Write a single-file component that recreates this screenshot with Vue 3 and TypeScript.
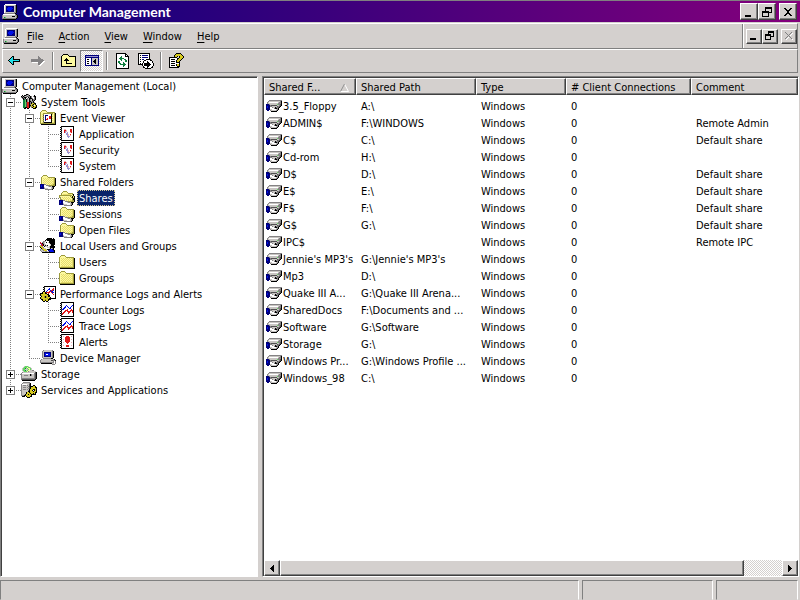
<script setup lang="ts">
import { computed, defineComponent, h, ref } from 'vue'

const palette: Record<string, string> = {
  k: '#000000', w: '#ffffff', g: '#848284', s: '#c8c5c2', d: '#505050',
  b: '#0010e8', n: '#00007b', y: '#fdf9a0', f: '#e6dc6c', o: '#9c9a3c',
  r: '#e01818', c: '#20e0e8', e: '#108040', l: '#60d860', p: '#9a94d0',
  t: '#008080', m: '#842184', a: '#d8cc20', i: '#f0b0b8',
}

const sprites: Record<string, string[]> = {
  pc: [
    '...wwwwwwwwwww..',
    '..wssssssssssgk.',
    '..wsnnnnnnnnsgk.',
    '..wsnnbbbbnnsgk.',
    '..wsnbbbbbbnsgk.',
    '..wsnbbbbbnnsgk.',
    '..wsnnbbbnnnsgk.',
    '..wsnnnnnnnnsgk.',
    '..wsssssssssggk.',
    '..gggggggggggk..',
    '.wwwwwwwwwwwwgk.',
    'gssssssssssssggk',
    'gssssssssskkksgk',
    'gselssssssssssgk',
    'ggggggggggggggk.',
    '.kkkkkkkkkkkkk..',
  ],
  tools: [
    '.....kkg........',
    '.k.kkgsgk....k..',
    'kgkgsgdggkg.gkk.',
    'gkgkkd.kgkg..gk.',
    '.gkgk.gskkkg.gk.',
    '..kegkgskgskggk.',
    '..eelkgskgskgk..',
    '..eelkgskkggk...',
    '..eeldrrkgkgkg..',
    '..eeldrrkgkaakk.',
    '..eeldrrkgaokak.',
    '..eeldrrkkako.ak',
    '..eeldrrkgoakaak',
    '..eekkrrk.gkaakk',
    '...kk.kk....kkk.',
    '................',
  ],
  eventviewer: [
    '..oooo..........',
    '.oyyyyo.........',
    'oyyyyyyoooooooo.',
    'oyyooooooooooyok',
    'oyfowwwwwwwkfyok',
    'oyydwnnnwwwkyyok',
    'oyfownwwwrrkfyok',
    'oyydwnwwwrrkyyok',
    'oyfownwrwrrkfyok',
    'oyydwnrrwwwkyyok',
    'oyfownwwwwwkfyok',
    'oyydwwwwwwwkyyok',
    'oyfokkkkkkkkffok',
    'oooooooooooooook',
    '.kkkkkkkkkkkkkkk',
    '................',
  ],
  log: [
    '..kkkkkkkkkkkkk.',
    '.kdwwwwwwwwwwwk.',
    '..kwwwwwwwwwwwk.',
    '.kdwwiiwwwwrrwk.',
    '..kwwrriwwwrrwk.',
    '.kdwwrpiwwwrrwk.',
    '..kwwrpwpwwirwk.',
    '.kdwwwwppwwwwwk.',
    '..kwwwwppiwrwwk.',
    '.kdwwwwwpiwiwwk.',
    '..kwwwwwpppwwwk.',
    '.kdwwwwwwpwwwwk.',
    '..kwwwwwwwwwwwk.',
    '.kdwwwwwwwwwwwk.',
    '..kkkkkkkkkkkkk.',
    '................',
  ],
  folder: [
    '................',
    '..oooo..........',
    '.oyyyyo.........',
    'oyyyyyyoooooooo.',
    'oyfyfyfyfyfyffok',
    'oyyfyfyfyfyfyfok',
    'oyfyfyfyfyfyffok',
    'oyyfyfyfyfyfyfok',
    'oyfyfyfyfyfyffok',
    'oyyfyfyfyfyfyfok',
    'oyfyfyfyfyfyffok',
    'oyyfyfyfyfyfyfok',
    'oyffffffffffffok',
    'oooooooooooooook',
    '.kkkkkkkkkkkkkkk',
    '................',
  ],
  shared: [
    '................',
    '...oooo.........',
    '..oyyyyo........',
    '.oyyyyyyooooooo.',
    '.oyfyfyfyfyfyfok',
    '.oyyfyfyfyfyffok',
    '.oyfyfyfyfyfyfok',
    '.oyyfyfyfyfyffok',
    '.oyfyfyfyfyfyfok',
    '.oyyfyfyfyfyffok',
    'nnnnggyfyfyffook',
    'nbnnwwgggooooook',
    'nbnnwwwwsggskkk.',
    'nnnnswwwwwwsgk..',
    'nnnngssswwwsgk..',
    '.....gggggggk...',
  ],
  shareopen: [
    '................',
    '....oooo........',
    '...oyyyyo.......',
    '..oyyyyyyooooo..',
    '..oyffffffffyok.',
    'oooooooooooooyk.',
    'oyyyyyyyyyyoykfk',
    'ogyfyfyfyfyyokfk',
    '.oyyfyfyfyfyyokk',
    '.ogfyfyfyfyfyokk',
    'nnnnggyfyfyffook',
    'nbnnwwgggooooook',
    'nbnnwwwwsggskkk.',
    'nnnnswwwwwwsgk..',
    'nnnngssswwwsgk..',
    '.....gggggggk...',
  ],
  users: [
    '.......kkkkk.k..',
    '......kkkkkkkkk.',
    '.....kskkkkkkkk.',
    '...ggswwwkkkkkk.',
    'r.ggswkwskkkkkk.',
    'mrkgswwwwskkkkk.',
    '.mrksswwwwskkkk.',
    'amrkskskwwskkk..',
    'aagwkssswskkkkk.',
    'kaagwwwssskkkkk.',
    '.kaasswwwsksgk..',
    'gsgaaaskkkbbnk..',
    'gssgaaawnbbbbnk.',
    '.gsssggssnbbbbk.',
    '..kkkkkkkkkkkkk.',
    '................',
  ],
  performance: [
    '....kkkkkkkkkkkk',
    '...kdwwwwwwwwwwk',
    '....kwwwwbwwwrwk',
    '...kdwwwbbwwrrwk',
    '....kwwbwwbrrbwk',
    '...kkwbwwrrbbwwk',
    '..kaakrrrrwrbbwk',
    'kkkaakkwrwwwrwwk',
    'kaaaaaakkwwwwrwk',
    'koaaaaaakkwwwwwk',
    '.kaaokoakkwwwwwk',
    'kaaaokoaaakwwwwk',
    'koaaaaaoakkkkkkk',
    '.kkaaoaakkk.....',
    '..kaakaak.......',
    '...kk.kk........',
  ],
  graph: [
    '..kkkkkkkkkkkkk.',
    '.kdwwwwwwwwwwwk.',
    '..kwwwwwwwwwwwk.',
    '.kdwwwwbwwwwwbk.',
    '..kwwwbwbwwwbwk.',
    '.kdwwbbwwbwbwwk.',
    '..kwbbwwwwbbwwk.',
    '.kdbbwwwrwwwrwk.',
    '..kwwwrrrwwrrrk.',
    '.kdwwrrwrrrrwrk.',
    '..kwrrwwwrrwwrk.',
    '.kdrrwwwwrwwwwk.',
    '..krwwwwwwwwwwk.',
    '.kdwwwwwwwwwwwk.',
    '..kkkkkkkkkkkkk.',
    '................',
  ],
  alert: [
    '..kkkkkkkkkkkkk.',
    '.kdwwwwwwwwwwwk.',
    '..kwiwwrrrwwiwk.',
    '.kdwwwrrrrrwwwk.',
    '..kwwwrrrrrwwwk.',
    '.kdwiwrrrrrwiwk.',
    '..kwwwrrrrrwwwk.',
    '.kdwwwrrrrrwwwk.',
    '..kwiwwrrrwwiwk.',
    '.kdwwwwwrwwwwwk.',
    '..kwwwwwwwwwwwk.',
    '.kdwiwwrrrwwiwk.',
    '..kwwwwrrrwwwwk.',
    '.kdwwwwwwwwwwwk.',
    '..kkkkkkkkkkkkk.',
    '................',
  ],
  device: [
    '...gssssssssg...',
    '..gsssssssssgk..',
    '..gsnnnnnnnsgk..',
    '..gsnbbbbbnsgk..',
    '..gsnbwwbbnsgk..',
    '..gsnbbbbbnsgk..',
    '..gsnnnnnnnsgk..',
    '..gsssssssssgk..',
    '...ggggggggkk...',
    '.gsssssssssssgk.',
    'gssssssssssddggk',
    'gssssssssssssgwg',
    'ggggggggggggggwg',
    '.kkkkkkkkkkksswg',
    '............ggg.',
    '................',
  ],
  storage: [
    '...sllls........',
    '..slllylls......',
    '.slleslyyls.....',
    '.sllssslyls.....',
    '.slleslyyssgg...',
    '..slllygsssssss.',
    '.gssssssssssssdk',
    'gwwwwwwwwwwwwgdk',
    'gsssssssskgssgdk',
    'gssggggsskgssgdk',
    'gssssssssssssgdk',
    'gssssssssssssgdk',
    'ggggggggggggggdk',
    'gdddddddddddddk.',
    '.kkkkkkkkkkkkk..',
    '................',
  ],
  services: [
    '..ggggggg.......',
    '.gssssssgk......',
    'gwwwwwssdk......',
    'gsgggsgsdk..kk..',
    'gssssssgdkkkaak.',
    'gsgggsgsdkaaaakk',
    'gssssssgdkaaaaak',
    'gsgggsgskaaakkak',
    'gssssssgkaakwkak',
    'gsssssskkaaakaak',
    'gsssskaakaaaaakk',
    'gsssskaaakaakak.',
    'gssskaakaakkkkk.',
    'gggkkaaaaak.....',
    '.kkk.kaaakk.....',
    '......kkk.......',
  ],
  drive: [
    '................',
    '................',
    '...ggggggggggggg',
    '..gsssssssssssgk',
    '.gswwwwwwwwwsggk',
    '.gssssssssssgggk',
    'nnngssssssslggdk',
    'nnnngddddddssgdk',
    'nbnnggsssssdgdk.',
    'nbnnwwgsskggdk..',
    'nnnnwwwwgkkgk...',
    'nnnnsswwwwsgk...',
    '.nn.gsssssgk....',
    '.....kkkkkk.....',
    '................',
    '................',
  ],
  back: [
    '................',
    '................',
    '................',
    '.....kk.........',
    '....kck.........',
    '...kcck.........',
    '..kccckkkkkkk...',
    '.kcccccccccck...',
    '..kccckkkkkkk...',
    '...kcck.........',
    '....kck.........',
    '.....kk.........',
    '................',
    '................',
    '................',
    '................',
  ],
  forward: [
    '................',
    '................',
    '................',
    '........g.......',
    '........gg......',
    '........ggg.....',
    '.gggggggggggg...',
    '.ggggggggggggg..',
    '.ggggggggggggww.',
    '..wwwwwwggggww..',
    '........gggww...',
    '........ggww....',
    '.........ww.....',
    '................',
    '................',
    '................',
  ],
  up: [
    '................',
    '..kkkkk.........',
    '.kyyyyyk........',
    'kyyyyyyykkkkkkk.',
    'kyyyyyyyyyyyyyk.',
    'kyyyykyyyyyyyyk.',
    'kyyykkkyyyyyyyk.',
    'kyykkkkkyyyyyyk.',
    'kyyyykyyyyyyyyk.',
    'kyyyykyyyyyyyyk.',
    'kyyyykkkkkkyyyk.',
    'kyyyyyyyyyyyyyk.',
    'kyyyyyyyyyyyyyk.',
    'kkkkkkkkkkkkkkk.',
    '................',
    '................',
  ],
  showtree: [
    '................',
    '................',
    '.nnnnnnnnnnnnnn.',
    '.nppppppppppppn.',
    '.nnnnnnnnnnnnnn.',
    '.nwwwwwnssssssn.',
    '.nwkkwwnssskssn.',
    '.nwwwwwnsskkssn.',
    '.nwkkwwnskkkssn.',
    '.nwwwwwnsskkssn.',
    '.nwkkwwnssskssn.',
    '.nwwwwwnssssssn.',
    '.nnnnnnnnnnnnnn.',
    '................',
    '................',
    '................',
  ],
  refresh: [
    '.kkkkkkkkkk.....',
    '.kwwwwwwwwkk....',
    '.kwwwwwwwwkwk...',
    '.kwwwwewwwkkkk..',
    '.kwwweewwwwwwk..',
    '.kwweeeeewwwwk..',
    '.kwwweewweewwk..',
    '.kwwwwewwweewk..',
    '.kweewwwwweewk..',
    '.kweewwwewwwwk..',
    '.kwweewweewwwk..',
    '.kwwweeeeeewwk..',
    '.kwwwwwweewwwk..',
    '.kwwwwwwewwwwk..',
    '.kwwwwwwwwwwwk..',
    '.kkkkkkkkkkkkk..',
  ],
  export: [
    'kkkkkkkkkkkk....',
    'kwwwwwwwwwwk....',
    'kwkwnnnnnnwk....',
    'kwwwwwwwwwwk....',
    'kwkwnnnnnnwk....',
    'kwwwwwwwwwwk....',
    'kwkwnnwwkkkkk...',
    'kwwwwwkkwwwwkk..',
    'kwkwwkwwwkwwwwk.',
    'kwwwwkwwwkkwwwk.',
    'kwkwkwkkkkkkwwwk',
    'kkkkkwkkkkkkkwwk',
    '....kwkkkkkkwwwk',
    '.....kwwwkkwwwk.',
    '.....kkwwkwwwkk.',
    '.......kkkkkk...',
  ],
  help: [
    '.......kkkkk....',
    '......kaaaaak...',
    '.....kaaaaaaak..',
    '.....kaak.kaaak.',
    'kkkkkkkk..kaaak.',
    'kwwwwwwwkkaaak..',
    'kwkkkkwwkaaak...',
    'kwwwwwwkaaak....',
    'kwkkkkwkaak.....',
    'kwwwwwwkkkk.....',
    'kwkkkkwwwwk.....',
    'kwwwwwwkaak.....',
    'kwkkkkwkaak.....',
    'kwwwwwwwkkk.....',
    'kkkkkkkkkk......',
    '................',
  ],
}

// Turns a sprite into one path per colour, joining horizontal runs.
function tracePaths(rows: string[]): { fill: string; d: string }[] {
  const byColour = new Map<string, string>()
  rows.forEach((row, y) => {
    let x = 0
    while (x < row.length) {
      const key = row[x]
      let end = x + 1
      while (end < row.length && row[end] === key) end++
      if (palette[key]) {
        byColour.set(key, (byColour.get(key) ?? '') + `M${x} ${y}h${end - x}v1H${x}z`)
      }
      x = end
    }
  })
  return [...byColour].map(([key, d]) => ({ fill: palette[key], d }))
}

const traced = Object.fromEntries(
  Object.entries(sprites).map(([name, rows]) => [name, tracePaths(rows)]),
)

const PixelIcon = defineComponent({
  props: { name: { type: String, required: true } },
  setup: (props) => () =>
    h(
      'svg',
      { viewBox: '0 0 16 16', width: 16, height: 16, 'shape-rendering': 'crispEdges', 'aria-hidden': 'true' },
      traced[props.name].map((p) => h('path', p)),
    ),
})

interface TreeNode { label: string; icon: string; depth: number; open?: boolean }

const nodes = ref<TreeNode[]>([
  { label: 'Computer Management (Local)', icon: 'pc', depth: 0 },
  { label: 'System Tools', icon: 'tools', depth: 1, open: true },
  { label: 'Event Viewer', icon: 'eventviewer', depth: 2, open: true },
  { label: 'Application', icon: 'log', depth: 3 },
  { label: 'Security', icon: 'log', depth: 3 },
  { label: 'System', icon: 'log', depth: 3 },
  { label: 'Shared Folders', icon: 'shared', depth: 2, open: true },
  { label: 'Shares', icon: 'shareopen', depth: 3 },
  { label: 'Sessions', icon: 'shared', depth: 3 },
  { label: 'Open Files', icon: 'shared', depth: 3 },
  { label: 'Local Users and Groups', icon: 'users', depth: 2, open: true },
  { label: 'Users', icon: 'folder', depth: 3 },
  { label: 'Groups', icon: 'folder', depth: 3 },
  { label: 'Performance Logs and Alerts', icon: 'performance', depth: 2, open: true },
  { label: 'Counter Logs', icon: 'graph', depth: 3 },
  { label: 'Trace Logs', icon: 'graph', depth: 3 },
  { label: 'Alerts', icon: 'alert', depth: 3 },
  { label: 'Device Manager', icon: 'device', depth: 2 },
  { label: 'Storage', icon: 'storage', depth: 1, open: false },
  { label: 'Services and Applications', icon: 'services', depth: 1, open: false },
])

const selected = ref('Shares')

const visibleRows = computed(() => {
  const shown: TreeNode[] = []
  let hiddenBelow = Infinity
  for (const node of nodes.value) {
    if (node.depth > hiddenBelow) continue
    hiddenBelow = node.open === false ? node.depth : Infinity
    shown.push(node)
  }
  return shown.map((node, i) => {
    const guides: string[] = []
    for (let level = 1; level <= node.depth; level++) {
      const next = shown.slice(i + 1).find((n) => n.depth <= level)
      const continues = next !== undefined && next.depth === level
      if (level === node.depth) guides.push(continues ? 'tee' : 'elbow')
      else guides.push(continues ? 'line' : 'blank')
    }
    return { node, guides }
  })
})

const menus = ['File', 'Action', 'View', 'Window', 'Help']

const columns = ['Shared F...', 'Shared Path', 'Type', '# Client Connections', 'Comment']

const shares = [
  ['3.5_Floppy', 'A:\\', ''],
  ['ADMIN$', 'F:\\WINDOWS', 'Remote Admin'],
  ['C$', 'C:\\', 'Default share'],
  ['Cd-rom', 'H:\\', ''],
  ['D$', 'D:\\', 'Default share'],
  ['E$', 'E:\\', 'Default share'],
  ['F$', 'F:\\', 'Default share'],
  ['G$', 'G:\\', 'Default share'],
  ['IPC$', '', 'Remote IPC'],
  ["Jennie's MP3's", "G:\\Jennie's MP3's", ''],
  ['Mp3', 'D:\\', ''],
  ['Quake III A...', 'G:\\Quake III Arena...', ''],
  ['SharedDocs', 'F:\\Documents and ...', ''],
  ['Software', 'G:\\Software', ''],
  ['Storage', 'G:\\', ''],
  ['Windows Pr...', 'G:\\Windows Profile ...', ''],
  ['Windows_98', 'C:\\', ''],
].map(([name, path, comment]) => ({ name, path, type: 'Windows', clients: 0, comment }))
</script>

<template>
  <div class="window">
    <header class="titlebar">
      <PixelIcon name="pc" />
      <h1>Computer Management</h1>
      <div class="controls">
        <button type="button" aria-label="Minimize">
          <svg viewBox="0 0 10 10" width="10" height="10"><path d="M1 8h6v2H1z" /></svg>
        </button>
        <button type="button" aria-label="Restore">
          <svg viewBox="0 0 10 10" width="10" height="10"><path fill-rule="evenodd" d="M3 0h7v6H7v4H0V4h3zM4 2v2h3v1h2V2zM1 6v3h5V6z" /></svg>
        </button>
        <button type="button" class="close" aria-label="Close">
          <svg viewBox="0 0 10 10" width="10" height="10"><path d="M1 1h2v1h1v1h2V2h1V1h2v1H8v1H7v1H6v2h1v1h1v1h1v1H7V8H6V7H4v1H3v1H1V8h1V7h1V6h1V4H3V3H2V2H1z" /></svg>
        </button>
      </div>
    </header>

    <div class="menuband">
      <nav class="menubar">
        <PixelIcon name="pc" />
        <button v-for="menu in menus" :key="menu" type="button"><u>{{ menu[0] }}</u>{{ menu.slice(1) }}</button>
      </nav>
      <div class="controls child">
        <button type="button" aria-label="Minimize child window">
          <svg viewBox="0 0 10 10" width="10" height="10"><path d="M1 7h6v2H1z" /></svg>
        </button>
        <button type="button" aria-label="Restore child window">
          <svg viewBox="0 0 10 10" width="10" height="10"><path fill-rule="evenodd" d="M3 0h6v6H6v3H0V3h3zM4 2v1h2v2h2V2zM1 5v3h4V5z" /></svg>
        </button>
        <button type="button" class="close" aria-label="Close child window" disabled>
          <svg viewBox="0 0 10 10" width="10" height="10">
            <path d="M2 2l7 7M9 2l-7 7" stroke="#fff" fill="none" />
            <path d="M1 1l7 7M8 1l-7 7" stroke="#808080" fill="none" />
          </svg>
        </button>
      </div>
    </div>

    <div class="toolbar">
      <button type="button" aria-label="Back"><PixelIcon name="back" /></button>
      <button type="button" aria-label="Forward" disabled><PixelIcon name="forward" /></button>
      <span class="divider"></span>
      <button type="button" aria-label="Up one level"><PixelIcon name="up" /></button>
      <button type="button" class="pressed" aria-label="Show or hide console tree" aria-pressed="true"><PixelIcon name="showtree" /></button>
      <span class="divider"></span>
      <button type="button" aria-label="Refresh"><PixelIcon name="refresh" /></button>
      <button type="button" aria-label="Export list"><PixelIcon name="export" /></button>
      <span class="divider"></span>
      <button type="button" aria-label="Help"><PixelIcon name="help" /></button>
    </div>

    <main class="panes">
      <ul class="tree">
        <li v-for="{ node, guides } in visibleRows" :key="node.label">
          <span v-for="(guide, i) in guides" :key="i" class="guide" :class="guide">
            <button
              v-if="i === guides.length - 1 && node.open !== undefined"
              type="button"
              class="expander"
              :class="{ collapsed: !node.open }"
              :aria-expanded="node.open"
              :aria-label="'Toggle ' + node.label"
              @click="node.open = !node.open"
            ></button>
          </span>
          <PixelIcon :name="node.icon" />
          <button type="button" class="label" :class="{ selected: selected === node.label }" @click="selected = node.label">{{ node.label }}</button>
        </li>
      </ul>

      <section class="list">
        <div class="viewport">
          <table>
            <colgroup>
              <col class="c-name" /><col class="c-path" /><col class="c-type" /><col class="c-clients" /><col />
            </colgroup>
            <thead>
              <tr>
                <th v-for="(column, i) in columns" :key="column" scope="col">
                  <div>
                    {{ column }}
                    <svg v-if="i === 0" class="sort" viewBox="0 0 9 8" width="9" height="8" aria-hidden="true">
                      <path d="M0 7.5h8.500L4.500 0" fill="none" stroke="#fff" />
                      <path d="M4.500 0L.5 7.500" fill="none" stroke="#909090" />
                    </svg>
                  </div>
                </th>
              </tr>
            </thead>
            <tbody>
              <tr v-for="share in shares" :key="share.name">
                <td><div class="name"><PixelIcon name="drive" />{{ share.name }}</div></td>
                <td>{{ share.path }}</td>
                <td>{{ share.type }}</td>
                <td>{{ share.clients }}</td>
                <td>{{ share.comment }}</td>
              </tr>
            </tbody>
          </table>
        </div>
        <div class="scrollbar">
          <button type="button" aria-label="Scroll left">
            <svg viewBox="0 0 4 7" width="4" height="7"><path d="M4 0v7H3V6H2V5H1V4H0V3h1V2h1V1h1V0z" /></svg>
          </button>
          <div class="track"><div class="thumb"></div></div>
          <button type="button" aria-label="Scroll right">
            <svg viewBox="0 0 4 7" width="4" height="7"><path d="M0 0v7h1V6h1V5h1V4h1V3H3V2H2V1H1V0z" /></svg>
          </button>
        </div>
      </section>
    </main>

    <footer class="statusbar"><span></span><span></span><span></span></footer>
  </div>
</template>

<style>
body {
  margin: 0;
  background: #d4d0ce;
}
</style>

<style scoped>
.window {
  display: flex;
  flex-direction: column;
  height: 100vh;
  background: #d4d0ce;
  color: #000;
  font: 11px/16px "DejaVu Sans Condensed", "Noto Sans", sans-serif;
  overflow: hidden;
}
svg {
  flex: none;
  display: block;
  shape-rendering: crispEdges;
}
.sort {
  shape-rendering: auto;
}
button {
  margin: 0;
  padding: 0;
  border: 0;
  background: none;
  color: inherit;
  font: inherit;
}
.titlebar {
  display: flex;
  align-items: center;
  gap: 5px;
  flex: none;
  box-sizing: border-box;
  height: 22px;
  padding: 0 3px 0 2px;
  border-top: 1px solid #808080;
  background: linear-gradient(90deg, #08007c, #84007c);
}
h1 {
  flex: 1;
  margin: 0;
  color: #fff;
  font: 700 14px/20px Lato, sans-serif;
}
.controls {
  display: flex;
}
.controls button {
  display: grid;
  place-items: center;
  box-sizing: border-box;
  width: 18px;
  height: 17px;
  border: 1px solid;
  border-color: #fff #404040 #404040 #fff;
  box-shadow: inset -1px -1px #808080;
  background: #d4d0ce;
}
.controls .close {
  margin-left: 3px;
}
.menuband {
  display: flex;
  flex: none;
  height: 24px;
  margin: 1px 2px 0 2px;
  border: 1px solid;
  border-color: #fff #808080 #808080 #fff;
}
.menubar {
  display: flex;
  align-items: center;
  flex: 1;
  border-right: 1px solid #808080;
}
.menubar button {
  padding: 1px 7px 0 8px;
}
u {
  text-underline-offset: 2px;
}
.controls.child {
  align-items: center;
  padding: 0 0 0 2px;
  border-left: 1px solid #fff;
}
.child button {
  width: 16px;
  height: 15px;
}
.toolbar {
  display: flex;
  align-items: center;
  flex: none;
  box-sizing: border-box;
  height: 24px;
  margin: 0 2px;
  border: 1px solid;
  border-color: #fff #808080 #808080 #fff;
}
.toolbar button {
  display: grid;
  place-items: center;
  box-sizing: border-box;
  width: 23px;
  height: 22px;
}
.toolbar .pressed {
  border: 1px solid;
  border-color: #808080 #fff #fff #808080;
  background: repeating-conic-gradient(#fff 0 25%, #d4d0ce 0 50%) 0 0 / 2px 2px;
}
.divider {
  width: 1px;
  height: 18px;
  margin: 0 3px;
  border-left: 1px solid #808080;
  background: #fff;
}
.panes {
  display: flex;
  gap: 4px;
  flex: 1;
  min-height: 0;
  margin-top: 3px;
}
.tree,
.list {
  box-sizing: border-box;
  border: 1px solid;
  border-color: #808080 #fff #fff #808080;
  box-shadow: inset 1px 1px #404040;
  background: #fff;
  padding: 1px 0 0 1px;
}
.tree {
  flex: none;
  width: 258px;
  margin: 0;
  list-style: none;
  overflow: hidden;
}
.tree li {
  display: flex;
  height: 16px;
}
.guide {
  display: grid;
  place-items: center start;
  flex: none;
  width: 19px;
  height: 16px;
  --v: repeating-linear-gradient(180deg, #808080 0 1px, transparent 1px 2px);
  --h: repeating-linear-gradient(90deg, #808080 0 1px, transparent 1px 2px);
  background-repeat: no-repeat;
}
.line {
  background-image: var(--v);
  background-size: 1px 16px;
  background-position: 8px 0;
}
.tee {
  background-image: var(--v), var(--h);
  background-size: 1px 16px, 11px 1px;
  background-position: 8px 0, 8px 8px;
}
.elbow {
  background-image: var(--v), var(--h);
  background-size: 1px 8px, 11px 1px;
  background-position: 8px 0, 8px 8px;
}
.expander {
  width: 9px;
  height: 9px;
  margin: 1px 0 0 4px;
  border: 1px solid #808080;
  box-sizing: border-box;
  background: linear-gradient(#000, #000) center / 5px 1px no-repeat, #fff;
}
.expander.collapsed {
  background: linear-gradient(#000, #000) center / 5px 1px no-repeat,
    linear-gradient(#000, #000) center / 1px 5px no-repeat, #fff;
}
.label {
  box-sizing: border-box;
  height: 16px;
  margin-left: 2px;
  padding: 1px 2px 0;
  line-height: 15px;
  white-space: nowrap;
}
.label.selected {
  background: #0a246a;
  color: #fff;
  outline: 1px dotted #d8c890;
  outline-offset: -1px;
}
.list {
  display: flex;
  flex-direction: column;
  flex: 1;
  min-width: 0;
  margin-right: 1px;
}
.viewport {
  flex: 1;
  min-height: 0;
  overflow: hidden;
}
table {
  width: 100%;
  table-layout: fixed;
  border-collapse: separate;
  border-spacing: 0;
}
.c-name { width: 92px; }
.c-path { width: 120px; }
.c-type { width: 90px; }
.c-clients { width: 125px; }
th {
  height: 17px;
  padding: 0;
  border: 1px solid;
  border-color: #fff #404040 #404040 #fff;
  box-shadow: inset -1px -1px #808080;
  box-sizing: border-box;
  background: #d4d0ce;
  font-weight: 400;
  text-align: left;
  line-height: 13px;
  white-space: nowrap;
}
th div {
  display: flex;
  align-items: center;
  justify-content: space-between;
  padding: 2px 6px 0 4px;
}
tbody::before {
  content: "";
  display: block;
  height: 2px;
}
td {
  height: 17px;
  padding: 2px 0 0 5px;
  box-sizing: border-box;
  line-height: 15px;
  white-space: nowrap;
}
td:first-child {
  padding: 0 0 0 2px;
}
.name {
  display: flex;
  align-items: flex-end;
  gap: 1px;
  height: 17px;
}
.scrollbar {
  display: flex;
  flex: none;
  height: 16px;
}
.scrollbar button,
.thumb {
  display: grid;
  place-items: center;
  box-sizing: border-box;
  width: 16px;
  height: 16px;
  border: 1px solid;
  border-color: #fff #404040 #404040 #fff;
  box-shadow: inset -1px -1px #808080;
  background: #d4d0ce;
}
.track {
  flex: 1;
  background: repeating-conic-gradient(#fff 0 25%, #d4d0ce 0 50%) 0 0 / 2px 2px;
}
.thumb {
  width: 92.5%;
}
.statusbar {
  display: grid;
  grid-template-columns: 1fr 131px 82px;
  gap: 3px;
  flex: none;
  height: 20px;
  padding: 3px 2px 0 0;
}
.statusbar span {
  border: 1px solid;
  border-color: #808080 #fff transparent #808080;
}
</style>
